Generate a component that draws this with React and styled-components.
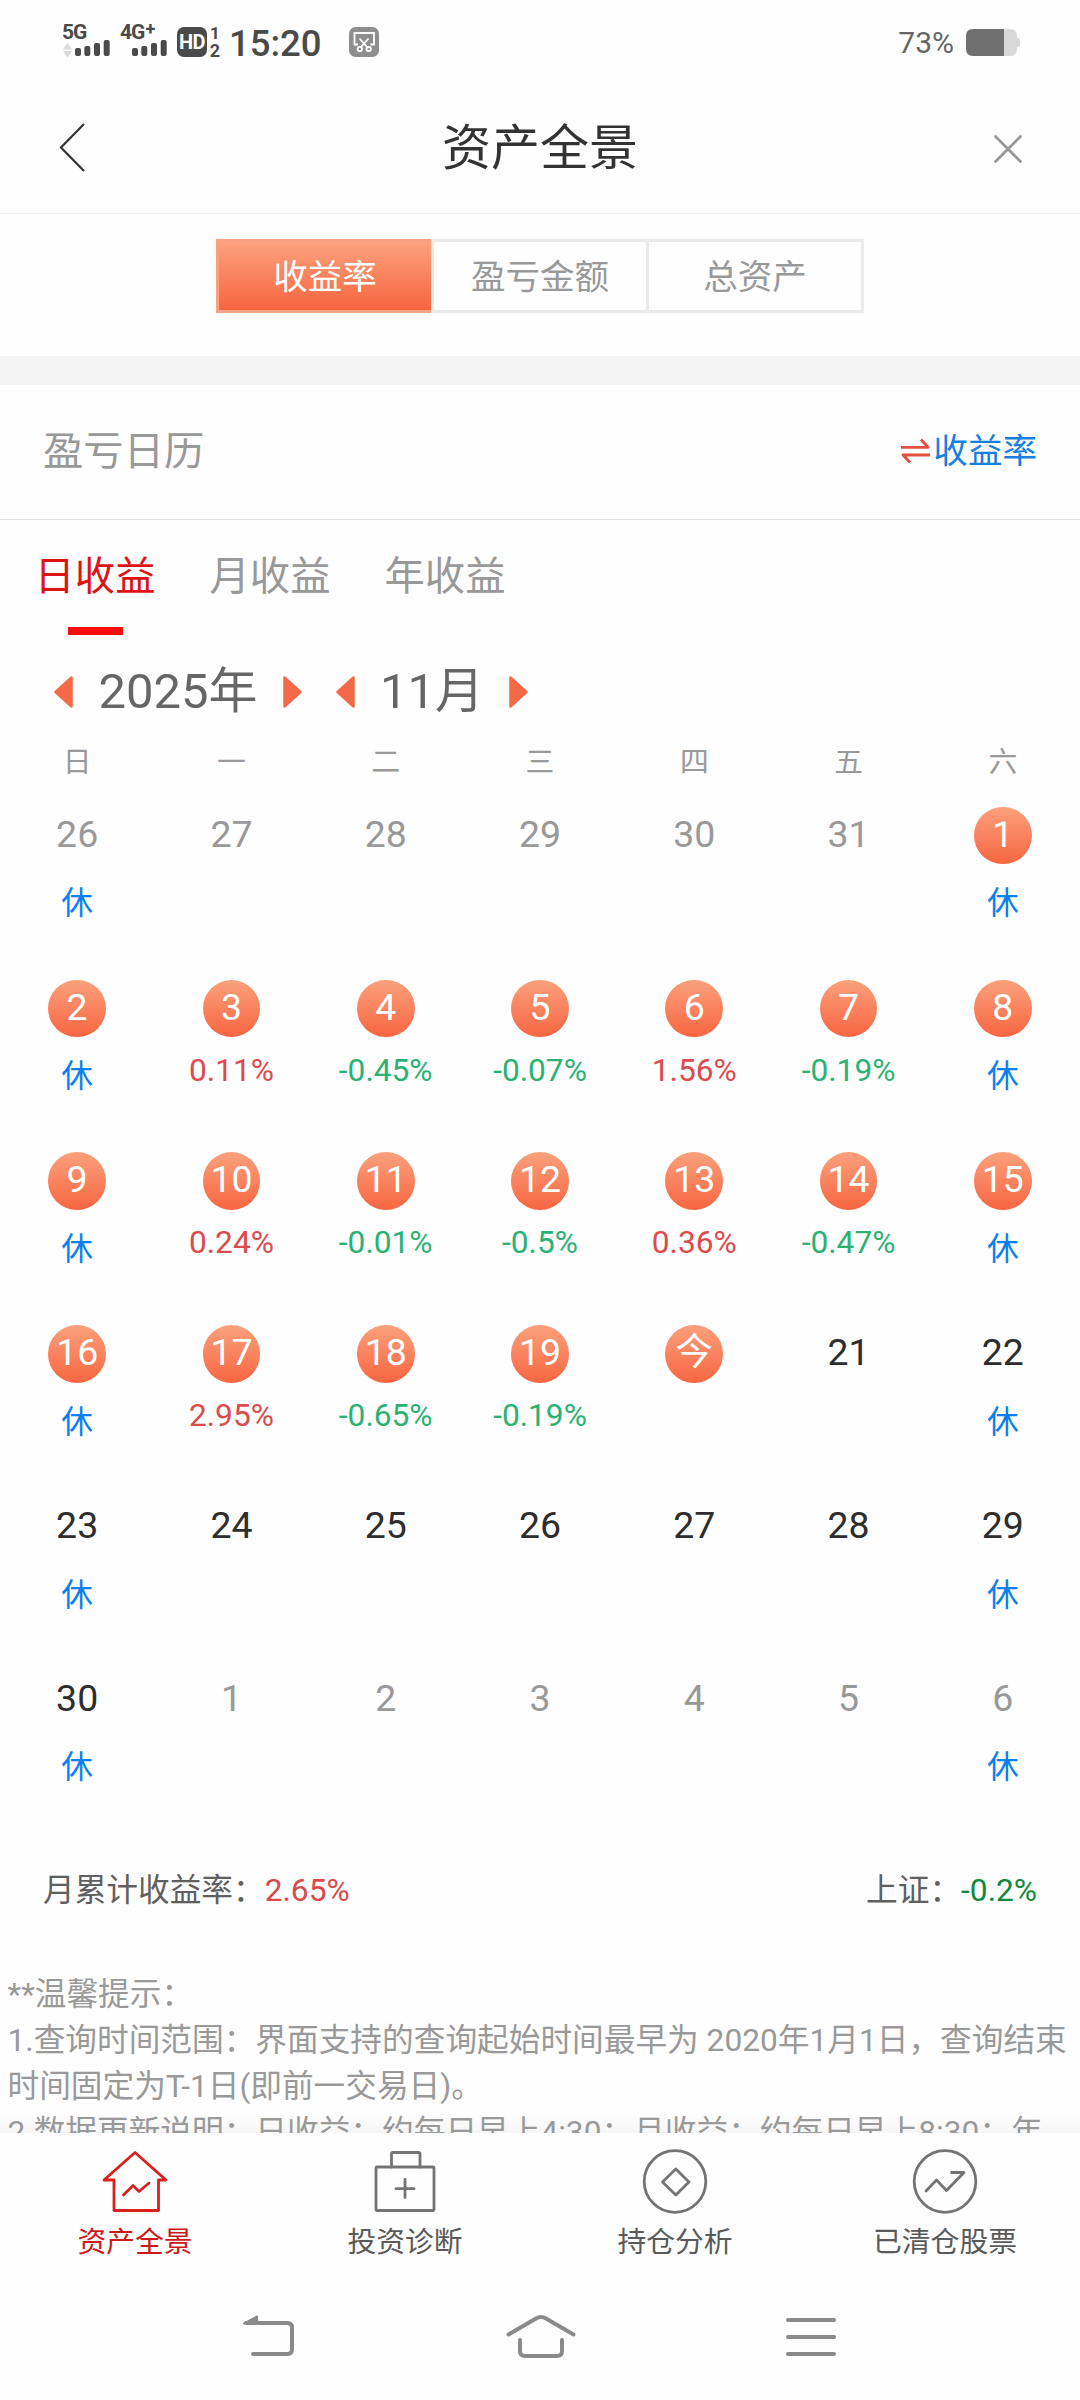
import React from 'react';
import styled, { createGlobalStyle, css } from 'styled-components';

const GlobalStyle = createGlobalStyle`
  body {
    margin: 0;
    background: #fefefe;
  }
  * {
    box-sizing: border-box;
  }
`;

const Screen = styled.div`
  width: 1080px;
  height: 2400px;
  display: flex;
  flex-direction: column;
  overflow: hidden;
  background: #fefefe;
  color: #333;
  font-family: Roboto, 'Noto Sans CJK SC', sans-serif;
`;

/* ---------- status bar ---------- */

const StatusBar = styled.div`
  height: 80px;
  flex: none;
  display: flex;
  align-items: flex-start;
  justify-content: space-between;
  padding: 25px 60px 0 62px;
  color: #4a4a4a;
`;

const StatusGroup = styled.div`
  display: flex;
  align-items: flex-start;
`;

const Signal = styled.div`
  width: ${(p) => p.$width}px;
  margin-right: 10px;
  display: flex;
  flex-direction: column;
`;

const SignalLabel = styled.span`
  height: 15px;
  display: flex;
  line-height: 15px;
  font-size: 21px;
  font-weight: 700;
  letter-spacing: -1px;
  white-space: nowrap;
`;

const Plus = styled.span`
  margin: -4px 0 0 1px;
  font-size: 18px;
`;

const SignalGlyph = styled.svg`
  display: block;
  width: 48px;
  height: 18px;
  align-self: flex-end;
`;

const HdBadge = styled.div`
  width: 30px;
  height: 30px;
  margin-top: 2px;
  border-radius: 7px;
  background: #4a4a4a;
  color: #fff;
  font-size: 20px;
  font-weight: 700;
  line-height: 31px;
  letter-spacing: -0.5px;
  text-align: center;
`;

const SimNumbers = styled.div`
  width: 12px;
  margin: 2px 8px 0 2px;
  display: flex;
  flex-direction: column;
  align-items: center;
  font-size: 17px;
  font-weight: 700;
  line-height: 12px;
  gap: 6px;
`;

const SimActive = styled.span`
  font-size: 18px;
`;

const Clock = styled.span`
  width: 120px;
  margin-top: 1px;
  font-size: 36.5px;
  font-weight: 500;
  line-height: 36px;
`;

const ShotIcon = styled.svg`
  display: block;
  margin-top: 2px;
`;

const BatteryText = styled.span`
  margin-right: 12px;
  color: #666;
  font-size: 30px;
  line-height: 36px;
`;

const BatteryIcon = styled.svg`
  display: block;
  margin-top: 4px;
`;

/* ---------- header ---------- */

const Header = styled.header`
  height: 134px;
  flex: none;
  display: grid;
  grid-template-columns: 200px 1fr 200px;
  align-items: center;
  padding: 0 57px;
  border-bottom: 1px solid #eee;
`;

const Title = styled.h1`
  margin: 0;
  padding-top: 4px;
  color: #333;
  font-size: 48.96px;
  font-weight: 400;
  line-height: 60px;
  text-align: center;
`;

const CloseIcon = styled.svg`
  justify-self: end;
  margin-top: 5px;
`;

/* ---------- segmented control ---------- */

const SegmentArea = styled.div`
  height: 142px;
  flex: none;
  padding-top: 25px;
  display: flex;
  justify-content: center;
  align-items: flex-start;
`;

const Segments = styled.div`
  width: 648px;
  height: 74px;
  display: grid;
  grid-template-columns: 215px 215px 218px;
  grid-template-rows: 74px;
`;

const Segment = styled.div`
  border: 3px solid #e9ebeb;
  border-right-width: ${(p) => (p.$last ? 3 : 0)}px;
  padding-top: 2px;
  color: #999;
  font-size: 34.56px;
  line-height: 66px;
  text-align: center;
  ${(p) =>
    p.$active &&
    css`
      border-color: #fba07e #f4a283 #f4a283 #f8a080;
      background: linear-gradient(#fca27d, #f76440);
      color: #fff;
    `}
`;

const Band = styled.div`
  height: 29px;
  flex: none;
  background: #f4f4f4;
`;

/* ---------- calendar card ---------- */

const SectionHead = styled.div`
  height: 135px;
  flex: none;
  display: flex;
  align-items: center;
  justify-content: space-between;
  padding: 0 43px;
  border-bottom: 1px solid #e2e2e2;
`;

const SectionTitle = styled.span`
  color: #999;
  font-size: 40.32px;
  line-height: 60px;
`;

const SwitchLink = styled.span`
  display: flex;
  align-items: center;
  gap: 3px;
  padding-bottom: 2px;
  color: #1680e0;
  font-size: 34.56px;
  line-height: 60px;
`;

const Tabs = styled.div`
  height: 115px;
  flex: none;
  display: flex;
  gap: 54px;
  padding: 27px 0 0 34.5px;
`;

const Tab = styled.div`
  width: 121px;
  display: flex;
  flex-direction: column;
  align-items: center;
  color: ${(p) => (p.$active ? '#dc1414' : '#999')};
  font-size: 40.32px;
  line-height: 60px;
  white-space: nowrap;
`;

const TabLine = styled.div`
  width: 55px;
  height: 8px;
  margin-top: 20px;
  background: #f80c0c;
`;

const Pickers = styled.div`
  height: 60px;
  flex: none;
  margin-top: 27px;
  padding-left: 54px;
  display: flex;
  gap: 34px;
`;

const Picker = styled.div`
  width: ${(p) => p.$width}px;
  display: flex;
  align-items: center;
  justify-content: space-between;
  color: #666;
  font-size: 48.96px;
  line-height: 60px;
`;

const Week = styled.div`
  height: 41px;
  flex: none;
  margin-top: 20px;
  display: grid;
  grid-template-columns: repeat(7, 1fr);
  color: #999;
  font-size: 28.8px;
  line-height: 41px;
  text-align: center;
`;

const Month = styled.div`
  flex: none;
  display: grid;
  grid-template-columns: repeat(7, 1fr);
  grid-auto-rows: 172.8px;
`;

const Day = styled.div`
  padding-top: 23.8px;
  display: flex;
  flex-direction: column;
  align-items: center;
`;

const dayColors = { out: '#999', future: '#2d2d2d', done: '#fff' };

const DayNumber = styled.span`
  width: 57.6px;
  height: 57.6px;
  border-radius: 50%;
  background: ${(p) => (p.$kind === 'done' ? 'linear-gradient(#fba17c, #f86541)' : 'none')};
  color: ${(p) => dayColors[p.$kind]};
  font-size: 37.44px;
  line-height: 54px;
  text-align: center;
`;

const Rate = styled.span`
  margin-top: 13.4px;
  color: ${(p) => (p.$down ? '#2bb273' : '#dc4b4e')};
  font-size: 31.68px;
  line-height: 40px;
`;

const Rest = styled.span`
  margin-top: 20px;
  color: #0c80ee;
  font-size: 31.68px;
  line-height: 40px;
`;

const Summary = styled.div`
  height: 40px;
  flex: none;
  margin-top: 51.2px;
  padding: 0 43px;
  display: flex;
  justify-content: space-between;
  color: #606060;
  font-size: 31.68px;
  line-height: 40px;
`;

const Figure = styled.span`
  color: ${(p) => (p.$down ? '#12883c' : '#d84a4c')};
`;

const Notes = styled.div`
  flex: 1;
  min-height: 0;
  margin-top: 61px;
  padding: 0 7.5px;
  overflow: hidden;
  color: #999;
  font-size: 31.68px;
  line-height: 46.08px;
  background: linear-gradient(to top, #f6f6f6, #fefefe 20px);

  p {
    margin: 0;
    white-space: nowrap;
  }
`;

/* ---------- bottom bars ---------- */

const TabBar = styled.nav`
  height: 137px;
  flex: none;
  display: grid;
  grid-template-columns: repeat(4, 1fr);
  background: #fefefe;
`;

const TabItem = styled.div`
  padding-top: 16px;
  display: flex;
  flex-direction: column;
  align-items: center;
  color: ${(p) => (p.$active ? '#cc1a1a' : '#5a5a5a')};
  font-size: 28.8px;
  line-height: 40px;

  svg {
    display: block;
    margin-bottom: 7px;
    stroke: ${(p) => (p.$active ? '#dc2020' : '#747474')};
  }
`;

const NavBar = styled.div`
  height: 130px;
  flex: none;
  display: flex;
  justify-content: space-between;
  padding: 44px 242px 0 242px;
`;

/* ---------- icons ---------- */

const Bars = ({ arrows }) => (
  <SignalGlyph viewBox="0 0 48 18">
    {arrows && <path d="M1 9.500 5.500 3 10 9.500zM1 11 5.500 17.500 10 11z" fill="#dadada" />}
    <g fill="#4a4a4a">
      <rect x="13" y="8" width="6" height="8" rx="2" />
      <rect x="22.300" y="6" width="6" height="10" rx="2" />
      <rect x="32" y="3" width="6" height="13" rx="2" />
      <rect x="41.700" y="0" width="6" height="16" rx="2" />
    </g>
  </SignalGlyph>
);

const Triangle = ({ right }) => (
  <svg width="19" height="32" viewBox="0 0 19 32">
    <path
      d={right ? 'M1.500 1.500 17.500 16 1.500 30.500z' : 'M17.500 1.500 1.500 16 17.500 30.500z'}
      fill="#f46a48"
      stroke="#f46a48"
      strokeWidth="2.500"
      strokeLinejoin="round"
    />
  </svg>
);

const tabProps = {
  width: 66,
  height: 66,
  viewBox: '0 0 66 66',
  fill: 'none',
  strokeWidth: 2.8,
  strokeLinecap: 'round',
  strokeLinejoin: 'round',
};

const HouseIcon = () => (
  <svg {...tabProps}>
    <path d="M33 3.500 64 31h-7.500v30.500h-44.500V31H2z" />
    <path d="M21.500 46 31 36.500 37 42.500 47 34" />
  </svg>
);

const CaseIcon = () => (
  <svg {...tabProps}>
    <rect x="4" y="18" width="58" height="43.500" rx="1" />
    <path d="M19.500 18V5q0-1.500 1.500-1.500h25.500q1.500 0 1.500 1.500v13M33 30.500v18M24 39.700h18" />
  </svg>
);

const DiamondIcon = () => (
  <svg {...tabProps}>
    <circle cx="33" cy="32.500" r="30.800" />
    <path d="M33.800 20 47 33 33.800 46 20.500 33z" />
  </svg>
);

const TrendIcon = () => (
  <svg {...tabProps}>
    <circle cx="33" cy="32.500" r="30.800" />
    <path d="M14 42 24.500 31 34.500 41.500 52 23.500H39.500" />
  </svg>
);

/* ---------- data ---------- */

const weekdays = ['日', '一', '二', '三', '四', '五', '六'];
const R = '休';

const days = [
  ['26', 'out', R], ['27', 'out'], ['28', 'out'], ['29', 'out'], ['30', 'out'], ['31', 'out'], ['1', 'done', R],
  ['2', 'done', R], ['3', 'done', '0.11%'], ['4', 'done', '-0.45%'], ['5', 'done', '-0.07%'], ['6', 'done', '1.56%'], ['7', 'done', '-0.19%'], ['8', 'done', R],
  ['9', 'done', R], ['10', 'done', '0.24%'], ['11', 'done', '-0.01%'], ['12', 'done', '-0.5%'], ['13', 'done', '0.36%'], ['14', 'done', '-0.47%'], ['15', 'done', R],
  ['16', 'done', R], ['17', 'done', '2.95%'], ['18', 'done', '-0.65%'], ['19', 'done', '-0.19%'], ['今', 'done'], ['21', 'future'], ['22', 'future', R],
  ['23', 'future', R], ['24', 'future'], ['25', 'future'], ['26', 'future'], ['27', 'future'], ['28', 'future'], ['29', 'future', R],
  ['30', 'future', R], ['1', 'out'], ['2', 'out'], ['3', 'out'], ['4', 'out'], ['5', 'out'], ['6', 'out', R],
];

const tabItems = [
  ['资产全景', HouseIcon],
  ['投资诊断', CaseIcon],
  ['持仓分析', DiamondIcon],
  ['已清仓股票', TrendIcon],
];

export default function App() {
  return (
    <>
      <GlobalStyle />
      <Screen>
        <StatusBar>
          <StatusGroup>
            <Signal $width={48}>
              <SignalLabel>5G</SignalLabel>
              <Bars arrows />
            </Signal>
            <Signal $width={47}>
              <SignalLabel>
                4G<Plus>+</Plus>
              </SignalLabel>
              <Bars />
            </Signal>
            <HdBadge>HD</HdBadge>
            <SimNumbers>
              <span>1</span>
              <SimActive>2</SimActive>
            </SimNumbers>
            <Clock>15:20</Clock>
            <ShotIcon width="30" height="30" viewBox="0 0 30 30" fill="none" stroke="#fff" strokeWidth="1.800">
              <rect width="30" height="30" rx="6.500" fill="#8e8e8e" stroke="none" />
              <path d="M9 17.500H5.500V6H25v11.500h-3.500M10.500 11.500 18 20M19.500 11.500 12 20" />
              <circle cx="10.800" cy="22" r="2.200" />
              <circle cx="19.700" cy="22" r="2.200" />
            </ShotIcon>
          </StatusGroup>
          <StatusGroup>
            <BatteryText>73%</BatteryText>
            <BatteryIcon width="54" height="27" viewBox="0 0 54 27">
              <path d="M7 0h37q7 0 7 7v2q3 0 3 2.500v4q0 2.500-3 2.500v2q0 7-7 7H7z" fill="#d8d8d8" />
              <path d="M38 0H7Q0 0 0 7v13q0 7 7 7h31z" fill="#707070" />
            </BatteryIcon>
          </StatusGroup>
        </StatusBar>

        <Header>
          <svg width="30" height="50" viewBox="0 0 30 50" fill="none" stroke="#333" strokeWidth="2.200">
            <path d="M27 2 4 25.500 27 49" />
          </svg>
          <Title>资产全景</Title>
          <CloseIcon width="30" height="30" viewBox="0 0 30 30" stroke="#999" strokeWidth="2.800" strokeLinecap="round">
            <path d="M2.500 2.500 27.500 27.500M27.500 2.500 2.500 27.500" />
          </CloseIcon>
        </Header>

        <SegmentArea>
          <Segments>
            <Segment $active>收益率</Segment>
            <Segment>盈亏金额</Segment>
            <Segment $last>总资产</Segment>
          </Segments>
        </SegmentArea>
        <Band />

        <SectionHead>
          <SectionTitle>盈亏日历</SectionTitle>
          <SwitchLink>
            <svg width="29" height="26" viewBox="0 0 29 26" fill="none" stroke="#e4503e" strokeWidth="2.800" strokeLinejoin="round">
              <path d="M0 9.300H27L20 1.500M29 17H2L9 24.500" />
            </svg>
            收益率
          </SwitchLink>
        </SectionHead>

        <Tabs>
          <Tab $active>
            日收益
            <TabLine />
          </Tab>
          <Tab>月收益</Tab>
          <Tab>年收益</Tab>
        </Tabs>

        <Pickers>
          <Picker $width={248}>
            <Triangle />
            2025年
            <Triangle right />
          </Picker>
          <Picker $width={192}>
            <Triangle />
            11月
            <Triangle right />
          </Picker>
        </Pickers>

        <Week>
          {weekdays.map((d) => (
            <span key={d}>{d}</span>
          ))}
        </Week>

        <Month>
          {days.map(([label, kind, note], i) => (
            <Day key={i}>
              <DayNumber $kind={kind}>{label}</DayNumber>
              {note === R && <Rest>{note}</Rest>}
              {note && note !== R && <Rate $down={note.startsWith('-')}>{note}</Rate>}
            </Day>
          ))}
        </Month>

        <Summary>
          <span>
            月累计收益率：<Figure>2.65%</Figure>
          </span>
          <span>
            上证：<Figure $down>-0.2%</Figure>
          </span>
        </Summary>

        <Notes>
          <p>**温馨提示：</p>
          <p>1.查询时间范围：界面支持的查询起始时间最早为 2020年1月1日，查询结束</p>
          <p>时间固定为T-1日(即前一交易日)。</p>
          <p>2.数据更新说明：日收益：约每日早上4:30；月收益：约每日早上8:30；年</p>
        </Notes>

        <TabBar>
          {tabItems.map(([label, Icon], i) => (
            <TabItem key={label} $active={i === 0}>
              <Icon />
              {label}
            </TabItem>
          ))}
        </TabBar>

        <NavBar>
          <svg width="54" height="46" viewBox="0 0 54 46" fill="none" stroke="#8a8a8a" strokeWidth="4" strokeLinecap="round">
            <path d="M4 9h41.500q4.500 0 4.500 4.500v22q0 4.500-4.500 4.500H11" />
            <path d="M2 9.500 15 2.500V9z" fill="#8a8a8a" strokeWidth="2" strokeLinejoin="round" />
          </svg>
          <svg width="70" height="46" viewBox="0 0 70 46" fill="none" stroke="#8a8a8a" strokeWidth="4" strokeLinecap="round">
            <path d="M2.500 20.500 30 4.500q5-3 10 0l27.500 16" />
            <path d="M14 26v11q0 5 5 5h32q5 0 5-5V26" />
          </svg>
          <svg width="52" height="46" viewBox="0 0 52 46" fill="none" stroke="#8a8a8a" strokeWidth="4" strokeLinecap="round">
            <path d="M2 6h46M2 23h46M2 40h46" />
          </svg>
        </NavBar>
      </Screen>
    </>
  );
}
